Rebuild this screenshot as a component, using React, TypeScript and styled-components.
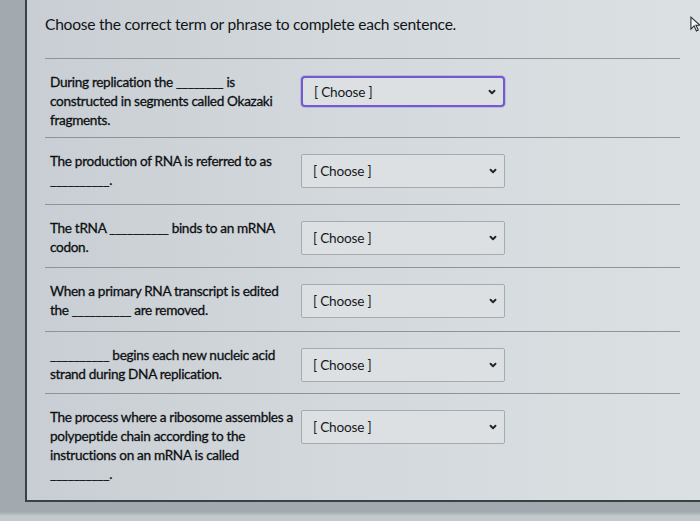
import styled, { createGlobalStyle } from "styled-components";
import { ChevronDown } from "lucide-react";

const GlobalStyle = createGlobalStyle`
  html, body {
    margin: 0;
    padding: 0;
    background: #a3aaaf;
  }
`;

const SHORT = "________";
const BLANK = "__________";

const questions = [
  {
    lines: [
      `During replication the ${SHORT} is`,
      "constructed in segments called Okazaki",
      "fragments.",
    ],
    height: 79,
    focused: true,
  },
  {
    lines: ["The production of RNA is referred to as", `${BLANK}.`],
    height: 67,
  },
  {
    lines: [`The tRNA ${BLANK} binds to an mRNA`, "codon."],
    height: 63,
  },
  {
    lines: ["When a primary RNA transcript is edited", `the ${BLANK} are removed.`],
    height: 64,
  },
  {
    lines: [`${BLANK} begins each new nucleic acid`, "strand during DNA replication."],
    height: 62,
  },
  {
    lines: [
      "The process where a ribosome assembles a",
      "polypeptide chain according to the",
      "instructions on an mRNA is called",
      `${BLANK}.`,
    ],
  },
];

function App() {
  return (
    <>
      <GlobalStyle />
      <Screen>
        <Panel>
          <Header>
            <Title>Choose the correct term or phrase to complete each sentence.</Title>
          </Header>
          <List>
            {questions.map((q, idx) => (
              <Row key={idx} rowHeight={q.height} last={idx === questions.length - 1}>
                <Prompt>
                  {q.lines.map((line, i) => (
                    <Line key={i}>{line}</Line>
                  ))}
                </Prompt>
                <Select focused={!!q.focused}>
                  <span>[ Choose ]</span>
                  <ChevronDown size={10} strokeWidth={4.5} color="#1f2427" />
                </Select>
              </Row>
            ))}
          </List>
        </Panel>
        <Cursor viewBox="0 0 12 18">
          <path d="M1 1 L1 14 L4.5 10.5 L7 16 L9 15 L6.5 9.8 L11 9.8 Z" fill="#f4f6f7" stroke="#2b2f33" strokeWidth="1.2" />
        </Cursor>
      </Screen>
    </>
  );
}
export default App;

const Screen = styled.div`
  position: relative;
  width: 700px;
  height: 521px;
  overflow: hidden;
  background: linear-gradient(to bottom, #a3aaaf 0, #a3aaaf 512px, #c3cacd 516px);
  font-family: Lato, "Open Sans", sans-serif;
`;

const Panel = styled.div`
  margin-left: 25px;
  height: 502px;
  box-sizing: border-box;
  border-left: 2px solid #3b4145;
  border-bottom: 2px solid #3b4145;
  background: linear-gradient(to right, #c8ced3 0%, #d4d9dd 50%, #dbe0e3 100%);
  padding: 0 20px 0 18px;
  display: flex;
  flex-direction: column;
`;

const Header = styled.div`
  height: 58px;
  box-sizing: border-box;
  padding-top: 14px;
`;

const Title = styled.h1`
  margin: 0;
  font-size: 15.6px;
  font-weight: 400;
  line-height: 20px;
  letter-spacing: -0.25px;
  color: #111417;
  white-space: nowrap;
`;

const List = styled.div`
  flex: 1;
  display: flex;
  flex-direction: column;
`;

const Row = styled.div<{ rowHeight?: number; last?: boolean }>`
  display: grid;
  grid-template-columns: 240px 204px;
  column-gap: 11px;
  align-items: start;
  box-sizing: border-box;
  height: ${(p) => (p.rowHeight ? `${p.rowHeight}px` : "auto")};
  flex: ${(p) => (p.last ? 1 : "none")};
  padding: 14px 0 0 5px;
  border-top: 1px solid #8c9499;
`;

const Prompt = styled.div`
  display: flex;
  flex-direction: column;
`;

const Line = styled.span`
  font-size: 13.6px;
  line-height: 19px;
  letter-spacing: -0.32px;
  color: #0d1012;
  white-space: nowrap;
  -webkit-text-stroke: 0.3px #0d1012;
`;

const Select = styled.div<{ focused: boolean }>`
  margin-top: ${(p) => (p.focused ? "3px" : "2px")};
  height: ${(p) => (p.focused ? "31px" : "34px")};
  box-sizing: border-box;
  display: flex;
  align-items: center;
  justify-content: space-between;
  padding: 0 6px 0 11px;
  background: #dce0e3;
  border: ${(p) => (p.focused ? "2px solid #7459cf" : "1px solid #a5acb1")};
  border-radius: ${(p) => (p.focused ? "4px" : "2px")};
  box-shadow: ${(p) => (p.focused ? "0 0 0 1px rgba(140, 120, 220, 0.35)" : "none")};
  font-size: 13.6px;
  letter-spacing: -0.2px;
  color: #15181b;
`;

const Cursor = styled.svg`
  position: absolute;
  top: 16px;
  left: 690px;
  width: 11px;
  height: 17px;
`;
